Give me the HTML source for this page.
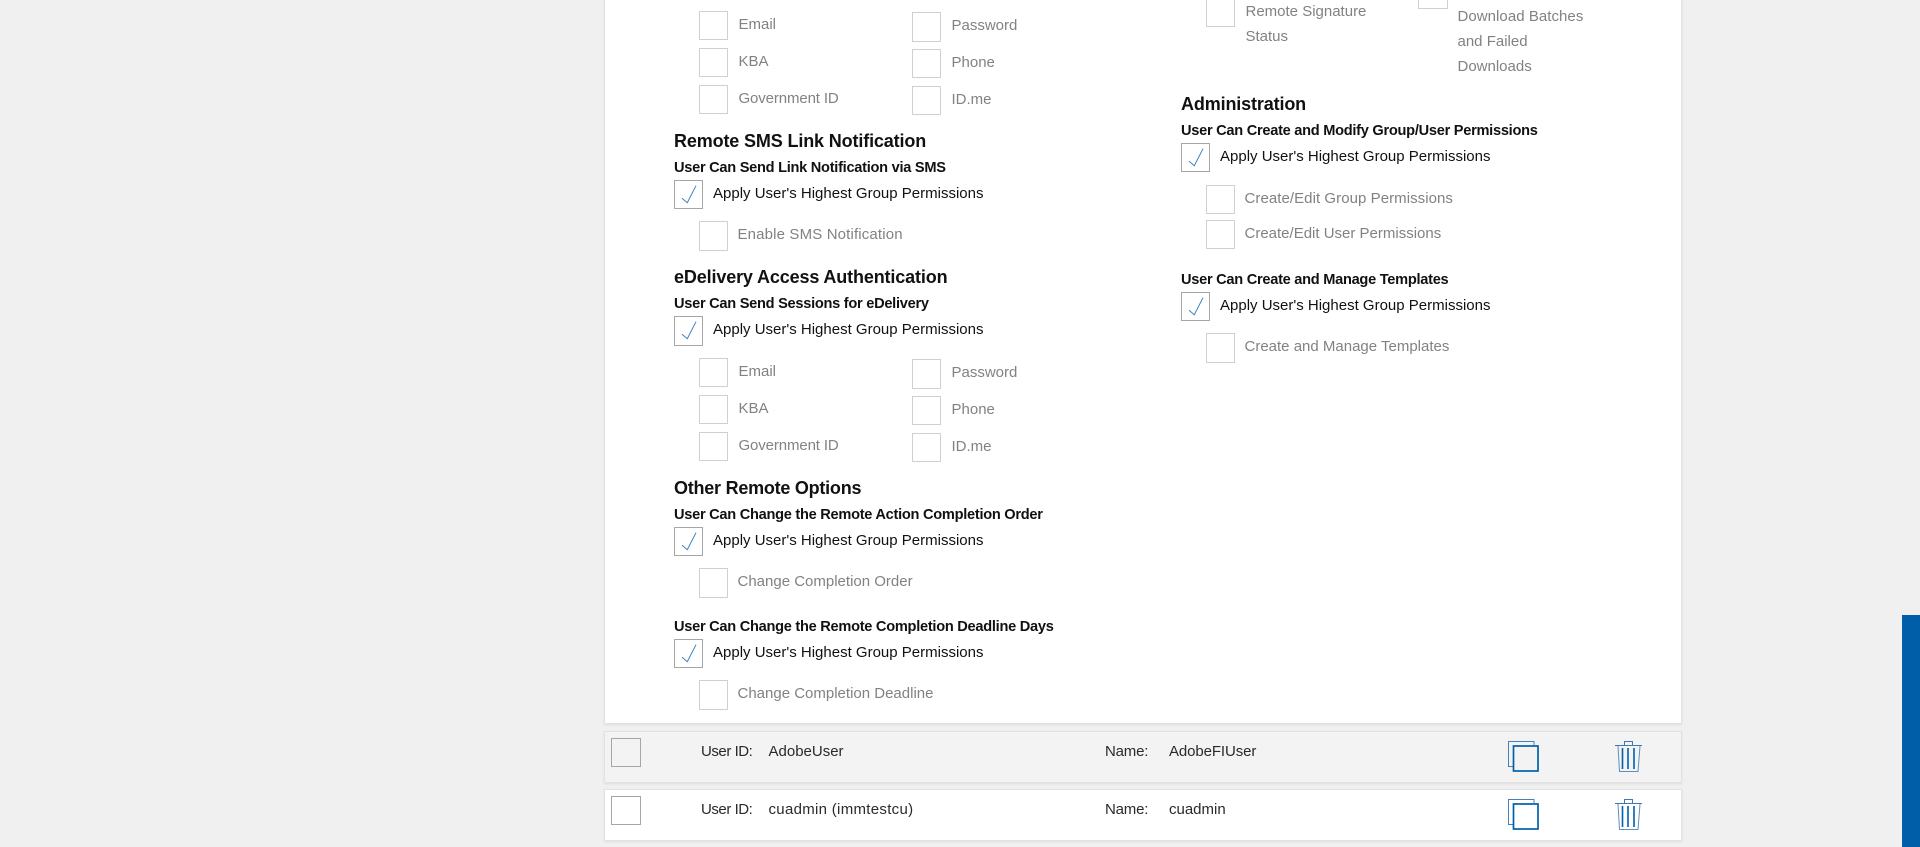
<!DOCTYPE html>
<html><head><meta charset="utf-8"><title>Permissions</title>
<style>
html,body{margin:0;padding:0;width:1920px;height:847px;overflow:hidden;background:#f0f0f0;font-family:"Liberation Sans",Arial,sans-serif}
.p,.r,.b,.c,.t,.g,.h,.s,.i{position:absolute}
.p{left:604px;top:-10px;width:1076px;height:733px;background:#fff;border:1px solid #e2e2e2;border-top:0;box-shadow:0 1px 2px #ddd}
.r{left:604px;width:1076px;height:50px;border:1px solid #e2e2e2;box-shadow:0 1px 2px #ddd}
.b{width:27px;height:27px;border:1px solid #d0d0d0;background:#fff;box-sizing:content-box}
.c{width:27px;height:27px;border:1px solid #a6a6a6}
.c svg{position:absolute;left:-1px;top:-1px}
.t,.g,.h,.s{white-space:nowrap;line-height:20px}
.t{font-size:15px;color:#111;margin-top:1px}
.g{font-size:15px;color:#828282;margin-top:1px;margin-left:-.5px}
.h{font-size:18px;font-weight:bold;color:#111;letter-spacing:-.14px}
.s{font-size:14.6px;font-weight:bold;color:#111;letter-spacing:-.27px;margin-top:1px}
.u{color:#2a2a2a}
</style></head><body>
<div class="p"></div>
<div class="r" style="top:731px;background:#f3f3f3"></div>
<div class="r" style="top:789px;background:#fff"></div>
<div class="i" style="left:1902px;top:615px;width:18px;height:232px;background:#005ea8"></div>

<!-- Top left -->
<div class="b" style="left:699px;top:11px"></div><div class="g" style="left:739px;top:14px">Email</div>
<div class="b" style="left:699px;top:48px"></div><div class="g" style="left:739px;top:51px">KBA</div>
<div class="b" style="left:699px;top:85px"></div><div class="g" style="left:739px;top:88px;letter-spacing:-.12px">Government ID</div>
<div class="b" style="left:912px;top:12px;height:28px"></div><div class="g" style="left:952px;top:15px">Password</div>
<div class="b" style="left:912px;top:49px"></div><div class="g" style="left:952px;top:52px">Phone</div>
<div class="b" style="left:912px;top:86px"></div><div class="g" style="left:952px;top:89px">ID.me</div>

<!-- SMS -->
<div class="h" style="left:674px;top:131px">Remote SMS Link Notification</div>
<div class="s" style="left:674px;top:157px">User Can Send Link Notification via SMS</div>
<div class="c" style="left:674px;top:180px"><svg width="29" height="29"><polyline points="8,18.3 13.3,22.7 22,5.7" fill="none" stroke="#3f7fc4" stroke-width="1"/></svg></div>
<div class="t" style="left:713px;top:183px">Apply User's Highest Group Permissions</div>
<div class="b" style="left:699px;top:221px;height:28px"></div><div class="g" style="left:738px;top:224px;letter-spacing:.15px">Enable SMS Notification</div>

<!-- eDelivery -->
<div class="h" style="left:674px;top:267px">eDelivery Access Authentication</div>
<div class="s" style="left:674px;top:293px">User Can Send Sessions for eDelivery</div>
<div class="c" style="left:674px;top:316px;height:28px"><svg width="29" height="30"><polyline points="8,18.3 13.3,22.7 22,5.7" fill="none" stroke="#3f7fc4" stroke-width="1"/></svg></div>
<div class="t" style="left:713px;top:319px">Apply User's Highest Group Permissions</div>
<div class="b" style="left:699px;top:358px"></div><div class="g" style="left:739px;top:361px">Email</div>
<div class="b" style="left:699px;top:395px"></div><div class="g" style="left:739px;top:398px">KBA</div>
<div class="b" style="left:699px;top:432px"></div><div class="g" style="left:739px;top:435px;letter-spacing:-.12px">Government ID</div>
<div class="b" style="left:912px;top:359px;height:28px"></div><div class="g" style="left:952px;top:362px">Password</div>
<div class="b" style="left:912px;top:396px"></div><div class="g" style="left:952px;top:399px">Phone</div>
<div class="b" style="left:912px;top:433px"></div><div class="g" style="left:952px;top:436px">ID.me</div>

<!-- Other -->
<div class="h" style="left:674px;top:478px;letter-spacing:-.24px">Other Remote Options</div>
<div class="s" style="left:674px;top:504px">User Can Change the Remote Action Completion Order</div>
<div class="c" style="left:674px;top:527px"><svg width="29" height="29"><polyline points="8,18.3 13.3,22.7 22,5.7" fill="none" stroke="#3f7fc4" stroke-width="1"/></svg></div>
<div class="t" style="left:713px;top:530px">Apply User's Highest Group Permissions</div>
<div class="b" style="left:699px;top:568px;height:28px"></div><div class="g" style="left:738px;top:571px">Change Completion Order</div>
<div class="s" style="left:674px;top:616px">User Can Change the Remote Completion Deadline Days</div>
<div class="c" style="left:674px;top:639px"><svg width="29" height="29"><polyline points="8,18.3 13.3,22.7 22,5.7" fill="none" stroke="#3f7fc4" stroke-width="1"/></svg></div>
<div class="t" style="left:713px;top:642px">Apply User's Highest Group Permissions</div>
<div class="b" style="left:699px;top:680px;height:28px"></div><div class="g" style="left:738px;top:683px">Change Completion Deadline</div>

<!-- Right column -->
<div class="b" style="left:1206px;top:-2px"></div><div class="g" style="left:1246px;top:1px">Remote Signature</div><div class="g" style="left:1246px;top:26px">Status</div>
<div class="b" style="left:1418px;top:-20px;width:28px"></div>
<div class="g" style="left:1458px;top:6px;letter-spacing:.05px">Download Batches</div><div class="g" style="left:1458px;top:31px">and Failed</div><div class="g" style="left:1458px;top:56px">Downloads</div>

<div class="h" style="left:1181px;top:94px">Administration</div>
<div class="s" style="left:1181px;top:120px">User Can Create and Modify Group/User Permissions</div>
<div class="c" style="left:1181px;top:143px"><svg width="29" height="29"><polyline points="8,18.3 13.3,22.7 22,5.7" fill="none" stroke="#3f7fc4" stroke-width="1"/></svg></div>
<div class="t" style="left:1220px;top:146px">Apply User's Highest Group Permissions</div>
<div class="b" style="left:1206px;top:185px"></div><div class="g" style="left:1245px;top:188px;letter-spacing:.06px">Create/Edit Group Permissions</div>
<div class="b" style="left:1206px;top:220px"></div><div class="g" style="left:1245px;top:223px">Create/Edit User Permissions</div>
<div class="s" style="left:1181px;top:269px">User Can Create and Manage Templates</div>
<div class="c" style="left:1181px;top:292px"><svg width="29" height="29"><polyline points="8,18.3 13.3,22.7 22,5.7" fill="none" stroke="#3f7fc4" stroke-width="1"/></svg></div>
<div class="t" style="left:1220px;top:295px">Apply User's Highest Group Permissions</div>
<div class="b" style="left:1206px;top:333px;height:28px"></div><div class="g" style="left:1245px;top:336px">Create and Manage Templates</div>

<!-- Rows -->
<div class="b" style="left:611px;top:738px;width:28px;background:#f3f3f3;border-color:#a6a6a6"></div>
<div class="t u" style="left:701px;top:741px;letter-spacing:-.45px">User ID:</div><div class="t u" style="left:768.5px;top:741px">AdobeUser</div>
<div class="t u" style="left:1105px;top:741px;letter-spacing:-.2px">Name:</div><div class="t u" style="left:1169px;top:741px;letter-spacing:-.1px">AdobeFIUser</div>
<div class="b" style="left:611px;top:796px;width:28px;border-color:#a6a6a6"></div>
<div class="t u" style="left:701px;top:799px;letter-spacing:-.45px">User ID:</div><div class="t u" style="left:768.5px;top:799px;letter-spacing:.3px">cuadmin (immtestcu)</div>
<div class="t u" style="left:1105px;top:799px;letter-spacing:-.2px">Name:</div><div class="t u" style="left:1169px;top:799px">cuadmin</div>

<svg class="i" style="left:0;top:0" width="1920" height="847">
<g fill="none" stroke="#0060a9">
<path d="M1513.5 766.5H1508.5V741.5H1534V745" stroke-width="1" stroke="#4a7fb8"/>
<rect x="1513.5" y="746" width="24.5" height="25" stroke-width="1.7"/>
<path d="M1615 745.5H1642" stroke-width="1" stroke="#3f78b5"/>
<path d="M1624.5 745V741.5H1632.5V745" stroke-width="1" stroke="#3f78b5"/>
<path d="M1618 746L1619.5 771.5H1638L1640 746" stroke-width="1" stroke="#5f8fc0"/>
<path d="M1622.5 748V769M1628 748V769M1634 748V769" stroke-width="1.6"/>
</g>
<g fill="none" stroke="#0060a9" transform="translate(0 58)">
<path d="M1513.5 766.5H1508.5V741.5H1534V745" stroke-width="1" stroke="#4a7fb8"/>
<rect x="1513.5" y="746" width="24.5" height="25" stroke-width="1.7"/>
<path d="M1615 745.5H1642" stroke-width="1" stroke="#3f78b5"/>
<path d="M1624.5 745V741.5H1632.5V745" stroke-width="1" stroke="#3f78b5"/>
<path d="M1618 746L1619.5 771.5H1638L1640 746" stroke-width="1" stroke="#5f8fc0"/>
<path d="M1622.5 748V769M1628 748V769M1634 748V769" stroke-width="1.6"/>
</g>
</svg>
</body></html>
